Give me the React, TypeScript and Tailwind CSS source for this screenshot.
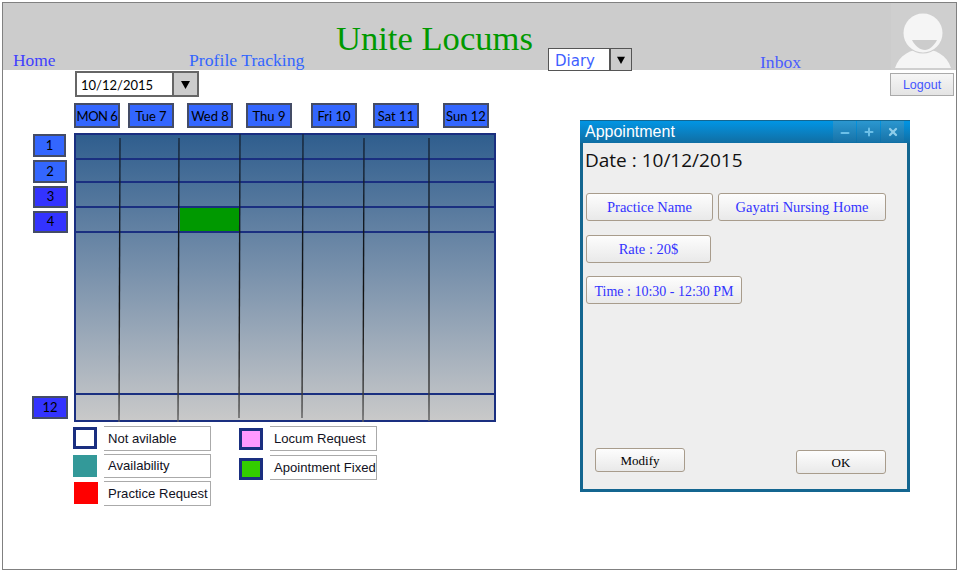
import React from "react";
import { Minus, Plus, X } from "lucide-react";

const hand = "font-['Comic_Sans_MS','Lato','Liberation_Sans',sans-serif]";
const serif = "font-['Liberation_Serif',serif]";
const sans = "font-['Liberation_Sans',sans-serif]";

function Arrow({ className }: { className: string }) {
  return (
    <svg viewBox="0 0 10 10" className={className}>
      <polygon points="0,1 10,1 5,10" fill="#000" />
    </svg>
  );
}

function Day({ label, className }: { label: string; className: string }) {
  return (
    <div
      className={`flex h-[25px] w-[46px] shrink-0 items-center justify-center whitespace-nowrap border-2 border-[#444c66] bg-[#3366ff] pt-[2px] text-[13px] text-black ${hand} ${className}`}
    >
      {label}
    </div>
  );
}

function RowLabel({ label, className }: { label: string; className: string }) {
  return (
    <div
      className={`flex items-center justify-center border-2 border-[#444c66] text-[13px] text-black ${hand} ${className}`}
    >
      {label}
    </div>
  );
}

function Legend({ label, className }: { label: string; className: string }) {
  return (
    <div
      className={`flex w-[107px] items-center whitespace-nowrap border-y border-r border-[#aaaaaa] pl-[4px] text-[13.1px] text-[#111122] ${sans} ${className}`}
    >
      {label}
    </div>
  );
}

function WinButton({ label, className, dark }: { label: string; className: string; dark?: boolean }) {
  return (
    <div
      className={`flex items-center justify-center whitespace-nowrap rounded-[3px] border border-[#a89c8c] bg-linear-to-b from-[#fdfdfd] to-[#e9e9e9] pt-[2px] ${serif} ${
        dark ? "text-black" : "text-[#3333ff]"
      } ${className}`}
    >
      {label}
    </div>
  );
}

function TitleButton({ children }: { children: React.ReactNode }) {
  return (
    <div className="flex h-[21px] w-[23px] items-center justify-center bg-linear-to-b from-[#2b97d0] to-[#1773a8]">
      {children}
    </div>
  );
}

function Lines() {
  const lines = [
    [120, 138, 119, 422],
    [179, 138, 178, 422],
    [240, 134, 239, 418],
    [303, 134, 302, 418],
    [364, 138, 363, 422],
    [429, 138, 429, 421],
  ];
  return (
    <svg className="pointer-events-none absolute left-0 top-0 h-[292px] w-[422px]" viewBox="74 133 422 292">
      <defs>
        <linearGradient id="vline" gradientUnits="userSpaceOnUse" x1="0" y1="134" x2="0" y2="422">
          <stop offset="0" stopColor="#16263a" />
          <stop offset="0.55" stopColor="#111111" />
          <stop offset="0.9" stopColor="#3a3a3a" />
          <stop offset="1" stopColor="#606060" />
        </linearGradient>
      </defs>
      {lines.map((l, i) => (
        <path key={i} d={`M${l[0]} ${l[1]} L${l[2]} ${l[3]}`} stroke="url(#vline)" strokeWidth="1.4" fill="none" />
      ))}
    </svg>
  );
}

export default function App() {
  return (
    <div className="h-[570px] w-[960px] overflow-hidden bg-white pl-[2px] pt-[2px]">
      <div className="h-[568px] w-[955px] border border-[#808080] bg-white">
        {/* Header */}
        <header className="flex h-[67px] w-[953px] bg-[#cccccc]">
          <div className={`flex w-[186px] items-end pl-[10px] text-[17.4px] leading-[19px] text-[#4040ff] ${serif}`}>
            Home
          </div>
          <div className={`flex w-[147px] items-end whitespace-nowrap text-[17.7px] leading-[19px] text-[#3366ff] ${serif}`}>
            Profile Tracking
          </div>
          <div className={`w-[212px] whitespace-nowrap pt-[15px] text-[34.6px] leading-[41px] text-[#009900] ${serif}`}>
            Unite Locums
          </div>
          <div className="w-[212px] pt-[45px]">
            <div className="flex h-[23px] w-[84px] border border-[#555555] bg-white">
              <div className="flex-1 pl-[6px] font-['DejaVu_Sans',sans-serif] text-[15px] leading-[24px] text-[#3f5fff]">
                Diary
              </div>
              <div className="flex w-[22px] items-center justify-center border-l-2 border-[#555555] bg-[#cccccc]">
                <Arrow className="h-[8px] w-[8px]" />
              </div>
            </div>
          </div>
          <div className={`flex w-[131px] items-end text-[17.6px] leading-[15px] text-[#4a5cff] ${serif}`}>Inbox</div>
          <div className="relative w-[65px] overflow-hidden bg-[#cfcfcf]">
            <svg viewBox="891 3 65 67" className="h-[67px] w-[65px]">
              <path d="M895 68 C899 55 911 49 923 49 C935 49 947 55 951 68 Z" fill="#f5f5f5" />
              <circle cx="923" cy="33" r="20.5" fill="#cfcfcf" />
              <circle cx="923" cy="33" r="19.5" fill="#f5f5f5" />
              <path d="M912 40 L937 40 C934 46 929 50 925 50 C920 50 915 46 912 40 Z" fill="#cccccc" />
            </svg>
          </div>
        </header>

        <div className="flex">
          {/* Calendar column */}
          <div className="w-[577px] shrink-0">
            <div className="ml-[72px] mt-[1px] flex h-[26px] w-[124px] border-2 border-[#666666] bg-white">
              <div className={`flex-1 pl-[4px] text-[13px] leading-[24px] text-black ${hand}`}>10/12/2015</div>
              <div className="flex w-[25px] items-center justify-center border-l-2 border-[#666666] bg-[#cccccc]">
                <Arrow className="h-[9px] w-[9px]" />
              </div>
            </div>

            <div className="mt-[6px] flex">
              <Day label="MON 6" className="ml-[71px] tracking-[-0.5px]" />
              <Day label="Tue 7" className="ml-[8px]" />
              <Day label="Wed 8" className="ml-[13px]" />
              <Day label="Thu 9" className="ml-[13px]" />
              <Day label="Fri 10" className="ml-[19px]" />
              <Day label="Sat 11" className="ml-[16px]" />
              <Day label="Sun 12" className="ml-[24px]" />
            </div>

            <div className="mt-[5px] flex">
              <div className="ml-[29px] w-[42px] shrink-0">
                <RowLabel label="1" className="ml-[1px] mt-[1px] h-[23px] w-[33px] bg-[#3366ff]" />
                <RowLabel label="2" className="ml-[1px] mt-[3px] h-[23px] w-[34px] bg-[#3366ff]" />
                <RowLabel label="3" className="ml-[1px] mt-[3px] h-[22px] w-[35px] bg-[#3333ff]" />
                <RowLabel label="4" className="ml-[1px] mt-[3px] h-[22px] w-[35px] bg-[#3333ff]" />
                <RowLabel label="12" className="mt-[163px] h-[23px] w-[36px] bg-[#3333ff]" />
              </div>
              <div className="relative w-[422px]">
                <div className="h-[289px] w-[422px] border-2 border-[#1a2f80] bg-linear-to-b from-[#2f5e8e] to-[#c9c9c9]">
                  <div className="h-[25px] border-b-2 border-[#1a2f80]" />
                  <div className="h-[23px] border-b-2 border-[#1a2f80]" />
                  <div className="h-[25px] border-b-2 border-[#1a2f80]" />
                  <div className="h-[25px] border-b-2 border-[#1a2f80]">
                    <div className="ml-[104px] h-full w-[60px] bg-[#009900]" />
                  </div>
                  <div className="h-[162px] border-b-2 border-[#1a2f80]" />
                </div>
                <Lines />
              </div>
            </div>

            <div className="ml-[70px] mt-[4px] flex">
              <div className="w-[138px]">
                <div className="flex h-[25px]">
                  <div className="mr-[7px] mt-[1px] h-[22px] w-[24px] border-[3px] border-[#1a2f80] bg-white" />
                  <Legend label="Not avilable" className="h-[25px]" />
                </div>
                <div className="mt-[3px] flex h-[24px]">
                  <div className="mr-[7px] mt-[1px] h-[22px] w-[24px] bg-[#339999]" />
                  <Legend label="Availability" className="h-[24px]" />
                </div>
                <div className="mt-[3px] flex h-[25px]">
                  <div className="ml-[1px] mr-[6px] mt-[1px] h-[22px] w-[24px] bg-[#ff0000]" />
                  <Legend label="Practice Request" className="h-[25px]" />
                </div>
              </div>
              <div className="ml-[28px] w-[138px]">
                <div className="flex h-[25px]">
                  <div className="mr-[7px] mt-[2px] h-[22px] w-[24px] border-[3px] border-[#1a2f80] bg-[#ff99ff]" />
                  <Legend label="Locum Request" className="h-[25px]" />
                </div>
                <div className="mt-[4px] flex h-[25px]">
                  <div className="mr-[7px] mt-[3px] h-[22px] w-[24px] border-[3px] border-[#1a2f80] bg-[#33cc00]" />
                  <Legend label="Apointment Fixed" className="h-[25px]" />
                </div>
              </div>
            </div>
          </div>

          {/* Right column */}
          <div className="w-[376px] shrink-0">
            <div className={`ml-[310px] mt-[3px] flex h-[23px] w-[64px] items-center justify-center border border-[#aaaaaa] bg-linear-to-b from-[#f6f6f6] to-[#e4e4e4] pt-[2px] text-[12.5px] text-[#4455ff] ${sans}`}>
              Logout
            </div>

            <div className="mt-[24px] h-[372px] w-[330px] bg-[#146690]">
              <div className="flex h-[23px] border-t border-[#146690] bg-linear-to-b from-[#0095e4] to-[#0f6ea3] pl-[5px] pr-[6px]">
                <div className={`flex-1 text-[16px] leading-[22px] text-white ${sans}`}>Appointment</div>
                <div className="flex gap-[1px]">
                  <TitleButton>
                    <Minus size={12} strokeWidth={4} className="mt-[3px] text-[#6cc0e8]" />
                  </TitleButton>
                  <TitleButton>
                    <Plus size={12} strokeWidth={4} className="text-[#6cc0e8]" />
                  </TitleButton>
                  <TitleButton>
                    <X size={12} strokeWidth={4.5} className="text-[#8fcdea]" />
                  </TitleButton>
                </div>
              </div>
              <div className="mx-[3px] flex h-[346px] w-[324px] flex-col bg-[#eeeeee]">
                <div className="pl-[2px] pt-[4px] font-['Open_Sans',sans-serif] text-[19px] leading-[26px] text-[#111111]">
                  Date : 10/12/2015
                </div>
                <div className="ml-[3px] mt-[20px] flex gap-[5px]">
                  <WinButton label="Practice Name" className="h-[28px] w-[127px] text-[14.5px]" />
                  <WinButton label="Gayatri Nursing Home" className="h-[28px] w-[168px] text-[14.5px]" />
                </div>
                <WinButton label="Rate : 20$" className="ml-[3px] mt-[14px] h-[28px] w-[125px] text-[14.5px]" />
                <WinButton label="Time : 10:30 - 12:30 PM" className="ml-[3px] mt-[13px] h-[28px] w-[156px] text-[14px]" />
                <div className="ml-[12px] mt-[144px] flex items-start">
                  <WinButton dark label="Modify" className="h-[24px] w-[90px] text-[13px]" />
                  <WinButton dark label="OK" className="ml-[111px] mt-[2px] h-[24px] w-[90px] text-[13px]" />
                </div>
              </div>
            </div>
          </div>
        </div>
      </div>
    </div>
  );
}
